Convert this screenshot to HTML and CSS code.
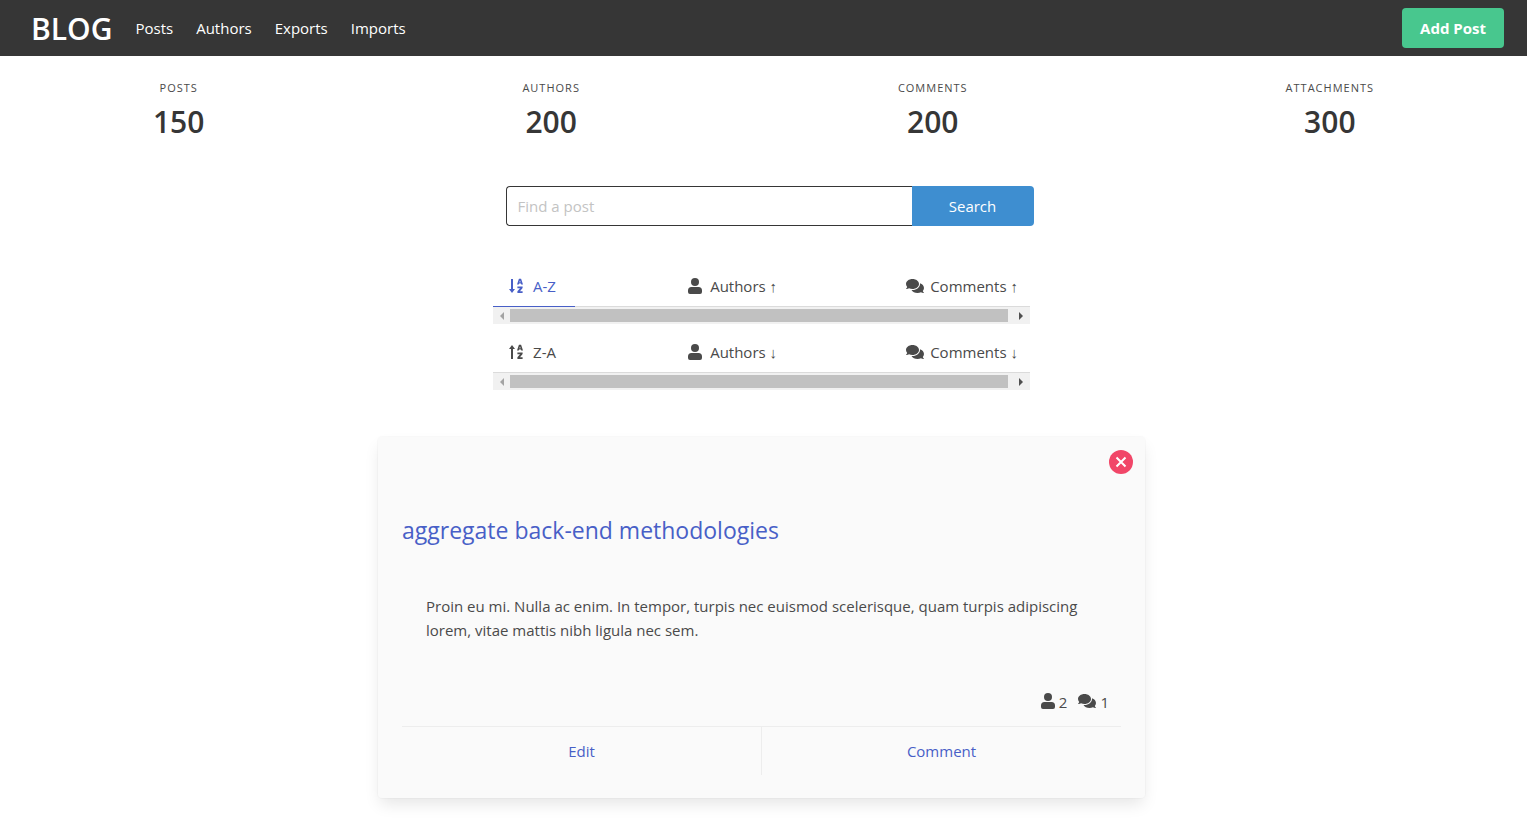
FILE: index.html
```html
<!DOCTYPE html>
<html lang="en">
<head>
<meta charset="utf-8">
<title>Blog</title>
<link rel="stylesheet" href="styles.css">
</head>
<body>
<svg class="sprite" aria-hidden="true">
  <symbol id="user" viewBox="0 0 14 16"><circle cx="7" cy="4" r="4"/><path d="M3.5 9h7A3.5 3.5 0 0 1 14 12.500V14a2 2 0 0 1-2 2H2a2 2 0 0 1-2-2v-1.500A3.500 3.500 0 0 1 3.500 9z"/></symbol>
  <symbol id="comments" viewBox="0 0 576 512"><path d="M416 192c0-88.400-93.100-160-208-160S0 103.600 0 192c0 34.300 14.100 65.900 38 92-13.400 30.200-35.500 54.200-35.800 54.500-2.200 2.300-2.800 5.700-1.500 8.700S4.800 352 8 352c36.600 0 66.900-12.300 88.700-25 32.200 15.700 70.300 25 111.300 25 114.900 0 208-71.600 208-160zm122 220c23.900-26 38-57.700 38-92 0-66.900-53.500-124.200-129.300-148.100.9 6.600 1.300 13.300 1.300 20.100 0 105.900-107.700 192-240 192-10.800 0-21.300-.8-31.700-1.900C207.800 439.600 281.800 480 368 480c41 0 79.100-9.200 111.300-25 21.800 12.700 52.100 25 88.700 25 3.200 0 6.100-1.900 7.300-4.800 1.300-2.900.7-6.300-1.500-8.700-.3-.3-22.400-24.200-35.800-54.500z"/></symbol>
  <symbol id="letters" viewBox="0 0 6 15"><path d="M0 6 2 0h2l2 6H4.200L4 5H2l-.2 1zM2.400 3.700h1.200L3 1.900zM.4 8h5.200v1.600L3 12.700h2.600v1.700H.4v-1.600L3 9.700H.4z"/></symbol>
  <symbol id="sort-down" viewBox="0 0 14 15"><path d="M2 .5h2v10h2L3 14.500 0 10.500h2z"/><use href="#letters" x="8" width="6" height="15"/></symbol>
  <symbol id="sort-up" viewBox="0 0 14 15"><path d="M2 14.500h2v-10h2L3 .5 0 4.500h2z"/><use href="#letters" x="8" width="6" height="15"/></symbol>
</svg>
<nav class="navbar">
  <a class="brand" href="#">BLOG</a>
  <a class="nav-link" href="#">Posts</a>
  <a class="nav-link" href="#">Authors</a>
  <a class="nav-link" href="#">Exports</a>
  <a class="nav-link" href="#">Imports</a>
  <button class="add" type="button">Add Post</button>
</nav>
<section class="stats">
  <div class="stat"><p class="label">Posts</p><p class="number">150</p></div>
  <div class="stat"><p class="label">Authors</p><p class="number">200</p></div>
  <div class="stat"><p class="label">Comments</p><p class="number">200</p></div>
  <div class="stat"><p class="label">Attachments</p><p class="number">300</p></div>
</section>
<form class="search">
  <input class="search-input" type="text" placeholder="Find a post" aria-label="Find a post">
  <button class="search-button" type="button">Search</button>
</form>
<main class="content">
  <div class="sorting">
    <div class="tabs">
      <a class="tab active" href="#"><svg class="icon sort"><use href="#sort-down"/></svg>A-Z</a>
      <a class="tab" href="#"><svg class="icon user"><use href="#user"/></svg>Authors ↑</a>
      <a class="tab" href="#"><svg class="icon comments"><use href="#comments"/></svg>Comments ↑</a>
    </div>
    <div class="scrollbar"><span class="arrow left"></span><span class="thumb"></span><span class="arrow right"></span></div>
    <div class="tabs second">
      <a class="tab" href="#"><svg class="icon sort"><use href="#sort-up"/></svg>Z-A</a>
      <a class="tab" href="#"><svg class="icon user"><use href="#user"/></svg>Authors ↓</a>
      <a class="tab" href="#"><svg class="icon comments"><use href="#comments"/></svg>Comments ↓</a>
    </div>
    <div class="scrollbar"><span class="arrow left"></span><span class="thumb"></span><span class="arrow right"></span></div>
  </div>
  <article class="card">
    <button class="delete" type="button" aria-label="Delete"><svg class="cross" viewBox="0 0 12 12"><path d="M1.500 1.500l9 9M10.500 1.500l-9 9"/></svg></button>
    <h2 class="title"><a class="link" href="#">aggregate back-end methodologies</a></h2>
    <p class="body">Proin eu mi. Nulla ac enim. In tempor, turpis nec euismod scelerisque, quam turpis adipiscing lorem, vitae mattis nibh ligula nec sem.</p>
    <div class="counts">
      <span class="count"><svg class="icon user"><use href="#user"/></svg>2</span>
      <span class="count"><svg class="icon comments"><use href="#comments"/></svg>1</span>
    </div>
    <footer class="actions">
      <a class="action link" href="#">Edit</a>
      <a class="action link" href="#">Comment</a>
    </footer>
  </article>
</main>
</body>
</html>
```
FILE: styles.css
```css
* { box-sizing: border-box; }
body {
  margin: 0;
  background: #fff;
  color: #4a4a4a;
  font: 15px/24px "Open Sans", "Noto Sans", sans-serif;
}
p, h2 { margin: 0; }
a { text-decoration: none; }
button, input { font: inherit; }
.sprite { position: absolute; width: 0; height: 0; }

.navbar {
  display: flex;
  align-items: center;
  gap: 23px;
  min-height: 56px;
  padding: 8px 23px 8px 31px;
  background: #363636;
}
.brand { padding-top: 2px; color: #fff; font-size: 30px; font-weight: 600; line-height: 36px; }
.nav-link { color: #fff; }
.add {
  height: 40px;
  margin-left: auto;
  padding: 0 18px;
  border: 0;
  border-radius: 4px;
  background: #48c78e;
  color: #fff;
  font-weight: 700;
}

.stats { display: flex; gap: 12px; padding-top: 24px; text-align: center; }
.stat { flex: 1 1 auto; }
.label {
  margin-bottom: 8px;
  font-size: 11px;
  line-height: 16px;
  letter-spacing: 1px;
  text-transform: uppercase;
}
.number { color: #363636; font-size: 30px; font-weight: 600; line-height: 36px; }

.search { display: flex; max-width: 540px; margin: 46px auto 40px; padding-left: 12px; }
.search-input {
  flex: 1;
  min-width: 0;
  height: 40px;
  padding: 0 11px;
  border: 1px solid #363636;
  border-right: 0;
  border-radius: 4px 0 0 4px;
  color: #363636;
}
.search-input::placeholder { color: #c3c3c3; opacity: 1; }
.search-button {
  width: 122px;
  border: 0;
  border-radius: 0 4px 4px 0;
  background: #3e8ed0;
  color: #fff;
}

.content { max-width: 771px; margin: 0 auto; padding: 0 4px 48px 0; }
.sorting { width: 70%; margin: 0 auto 47px; }
.tabs { display: flex; justify-content: space-between; border-bottom: 1px solid #dbdbdb; }
.second { margin-top: 8px; }
.tab {
  display: flex;
  align-items: center;
  min-width: 82px;
  margin-bottom: -1px;
  padding: 8px 16px;
  border-bottom: 1px solid transparent;
  color: #4a4a4a;
}
.tab:last-child { padding-right: 12px; }
.active { border-color: #485fc7; color: #485fc7; }
.icon { height: 16px; fill: currentColor; }
.icon.user { width: 14px; }
.icon.comments { width: 18px; }
.icon.sort { width: 14px; }
.tab .icon { margin-right: 8px; }
.tab .sort { margin-right: 10px; }
.tab .comments { margin-right: 6px; }
.scrollbar { display: flex; align-items: center; height: 17px; background: #f1f1f1; }
.thumb { flex: 1; height: 13px; margin-right: 5px; background: #c1c1c1; }
.arrow { display: flex; justify-content: center; width: 17px; }
.arrow::before { content: ""; border: 4px solid transparent; }
.left::before { border-left: 0; border-right-color: #a3a3a3; }
.right::before { border-right: 0; border-left-color: #505050; }

.card {
  position: relative;
  padding: 75px 24px 23px;
  border-radius: 4px;
  background: #fafafa;
  box-shadow: 0 8px 16px -2px rgba(10, 10, 10, .1), 0 0 0 1px rgba(10, 10, 10, .02);
}
.delete {
  position: absolute;
  top: 13px;
  right: 12px;
  display: grid;
  place-items: center;
  width: 24px;
  height: 24px;
  padding: 0;
  border: 0;
  border-radius: 50%;
  background: #f14668;
}
.cross { width: 12px; height: 12px; stroke: #fff; stroke-width: 2; }
.link { color: #485fc7; }
.title { font-size: 23px; font-weight: 400; line-height: 36px; }
.body { padding: 46px 24px 0; }
.counts { display: flex; justify-content: flex-end; gap: 11px; padding: 48px 12px 12px; }
.count { display: flex; align-items: center; gap: 4px; }
.count .icon { margin-bottom: 3px; }
.actions { display: flex; border-top: 1px solid #ededed; }
.action { flex: 1; padding: 12px; text-align: center; }
.action + .action { border-left: 1px solid #ededed; }
```
